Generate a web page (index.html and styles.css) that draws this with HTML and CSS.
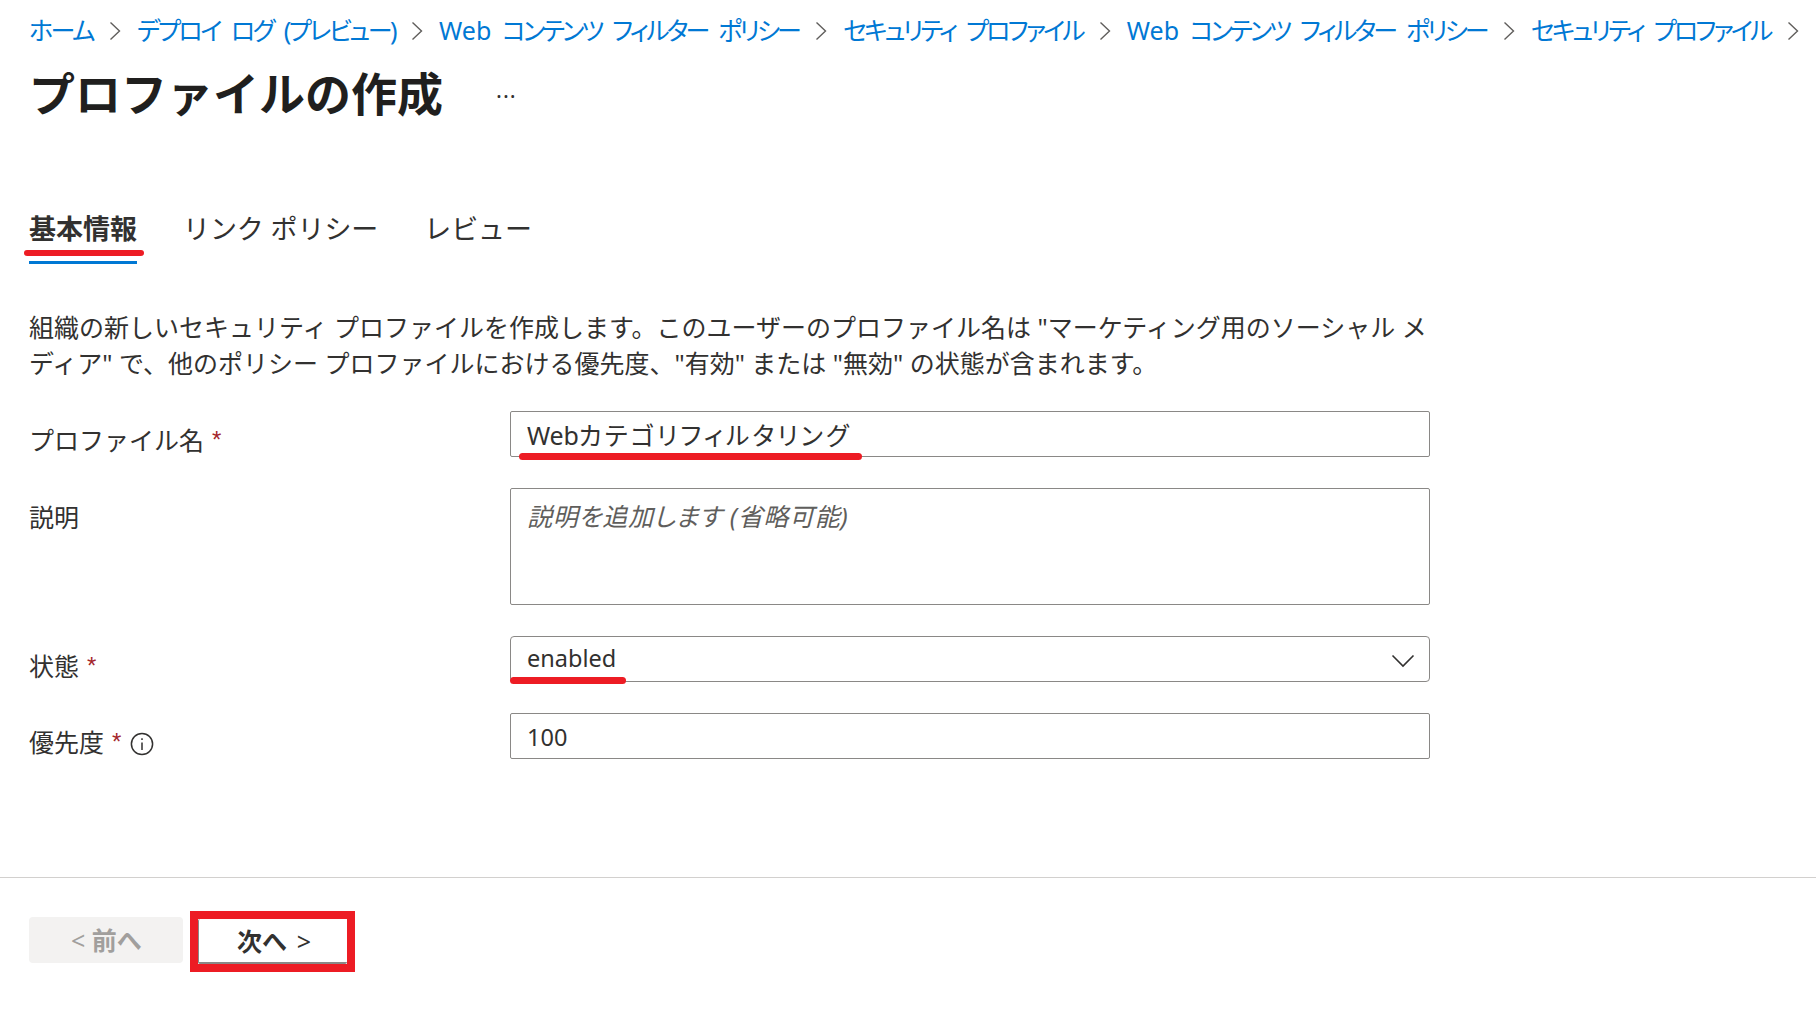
FILE: index.html
```html
<!DOCTYPE html>
<html lang="ja">
<head>
<meta charset="utf-8">
<title>プロファイルの作成</title>
<link rel="stylesheet" href="styles.css">
</head>
<body>
<div class="page">
  <nav class="crumbs">
    <a class="crumb crumb-loose">ホーム</a><svg class="chev" viewBox="0 0 12 20"><path d="M1.5 1.5 L10.5 10 L1.5 18.5"/></svg>
    <a class="crumb crumb-loose">デプロイ ログ (プレビュー)</a><svg class="chev" viewBox="0 0 12 20"><path d="M1.5 1.5 L10.5 10 L1.5 18.5"/></svg>
    <a class="crumb"><span class="latin">Web</span> コンテンツ フィルター ポリシー</a><svg class="chev" viewBox="0 0 12 20"><path d="M1.5 1.5 L10.5 10 L1.5 18.5"/></svg>
    <a class="crumb">セキュリティ プロファイル</a><svg class="chev" viewBox="0 0 12 20"><path d="M1.5 1.5 L10.5 10 L1.5 18.5"/></svg>
    <a class="crumb"><span class="latin">Web</span> コンテンツ フィルター ポリシー</a><svg class="chev" viewBox="0 0 12 20"><path d="M1.5 1.5 L10.5 10 L1.5 18.5"/></svg>
    <a class="crumb">セキュリティ プロファイル</a><svg class="chev" viewBox="0 0 12 20"><path d="M1.5 1.5 L10.5 10 L1.5 18.5"/></svg>
  </nav>
  <header class="title-row">
    <h1 class="title">プロファイルの作成</h1>
    <span class="more">...</span>
  </header>
  <div class="tabs">
    <div class="tab tab-active">基本情報<span class="mark mark-tab"></span></div>
    <div class="tab">リンク ポリシー</div>
    <div class="tab">レビュー</div>
  </div>
  <p class="intro">組織の新しいセキュリティ プロファイルを作成します。このユーザーのプロファイル名は "マーケティング用のソーシャル メディア" で、他のポリシー プロファイルにおける優先度、"有効" または "無効" の状態が含まれます。</p>
  <form class="form">
    <div class="field">
      <label class="label">プロファイル名 <span class="req">*</span></label>
      <div class="box box-name"><span class="latin">Web</span>カテゴリフィルタリング<span class="mark mark-name"></span></div>
    </div>
    <div class="field">
      <label class="label">説明</label>
      <div class="box box-area">説明を追加します (省略可能)</div>
    </div>
    <div class="field field-state">
      <label class="label label-state">状態 <span class="req">*</span></label>
      <div class="box box-select"><span class="select-value">enabled</span>
        <svg class="caret" viewBox="0 0 24 14"><path d="M1.5 1.5 L12 12 L22.5 1.5"/></svg>
        <span class="mark mark-state"></span>
      </div>
    </div>
    <div class="field field-num">
      <label class="label">優先度 <span class="req">*</span>
        <svg class="info" viewBox="0 0 24 24"><circle cx="12" cy="12" r="10.6"/><path d="M12 10.5 V18 M12 6.2 V8"/></svg>
      </label>
      <div class="box box-num">100</div>
    </div>
  </form>
  <footer class="footer">
    <button class="btn btn-off" type="button"><span class="btn-arrow">&lt;</span> 前へ</button>
    <div class="next-frame"><button class="btn btn-next" type="button">次へ <span class="btn-arrow">&gt;</span></button></div>
  </footer>
</div>
</body>
</html>
```
FILE: styles.css
```css
* { box-sizing: border-box; }
html, body { margin: 0; height: 100%; background: #fff; }
body {
  font-family: "Noto Sans", "Noto Sans CJK JP", sans-serif;
  color: #323130;
  overflow: hidden;
}
.page { height: 1011px; display: flex; flex-direction: column; }
.crumbs {
  display: flex; align-items: center; gap: 14px;
  height: 30px; margin-top: 15px; padding-left: 29px;
  white-space: nowrap;
}
.crumb { color: #0078d4; font-size: 25px; letter-spacing: -2.85px; line-height: 30px; font-feature-settings: "palt"; word-spacing: 7px; }
.crumb-loose { letter-spacing: -2.5px; }
.crumb .latin { letter-spacing: 0; }
.chev { width: 12px; height: 20px; margin: 2px 2px 0; flex: none; }
.chev path { fill: none; stroke: #605e5c; stroke-width: 1.4; }
.title-row {
  display: flex; align-items: center;
  height: 60px; margin-top: 18px; padding-left: 29px;
}
.title { margin: 0; font-size: 46px; font-weight: 700; color: #201f1e; line-height: 60px; }
.more { margin-left: 53px; margin-top: -8px; font-size: 22px; letter-spacing: 1px; color: #323130; line-height: 20px; }
.tabs {
  display: flex; gap: 46px;
  margin-top: 86px; padding-left: 29px;
}
.tab { position: relative; font-size: 27px; line-height: 40px; height: 53px; letter-spacing: -.1px; }
.tab-active { font-weight: 700; border-bottom: 3px solid #0078d4; height: 55px; color: #323130; font-feature-settings: "palt"; letter-spacing: 0; }
.mark { position: absolute; background: #ed1c24; border-radius: 4px; height: 6px; }
.mark-tab { left: -5px; right: -7px; bottom: 5px; }
.intro {
  margin: 45px 0 0 29px; width: 1401px;
  font-size: 25px; line-height: 36px; color: #323130;
}
.form { display: flex; flex-direction: column; gap: 30px; margin: 30px 0 0 29px; }
.field { display: grid; grid-template-columns: 481px 920px; align-items: start; }
.field-state { margin-top: 1px; }
.field-num { margin-top: -1px; }
.label { display: flex; align-items: center; gap: 8px; font-size: 25px; line-height: 36px; padding-top: 11px; white-space: nowrap; }
.label-state { padding-top: 12px; }
.req { color: #a4262c; font-family: "Liberation Sans", sans-serif; font-size: 24px; }
.info { width: 24px; height: 24px; margin: 4px 0 0 1px; }
.info circle, .info path { fill: none; stroke: #323130; stroke-width: 1.5; }
.box {
  position: relative; height: 46px;
  border: 1px solid #8a8886; border-radius: 2px;
  padding: 0 16px; font-size: 23.5px; line-height: 44px; color: #323130;
}
.box-name { font-feature-settings: "palt"; font-size: 25px; letter-spacing: 3px; line-height: 46px; }
.box-name .latin { letter-spacing: -.2px; }
.box-area { height: 117px; font-size: 25px; font-style: italic; color: #605e5c; line-height: 54px; font-feature-settings: "palt"; letter-spacing: .7px; }
.box-select { display: flex; justify-content: space-between; align-items: center; border-radius: 4px; }
.select-value { margin-top: -3px; }
.box-num { line-height: 46px; }
.caret { position: absolute; right: 14px; top: 17px; width: 24px; height: 14px; }
.caret path { fill: none; stroke: #323130; stroke-width: 1.6; }
.mark-name { left: 8px; width: 343px; top: 41px; height: 7px; }
.mark-state { left: -1px; width: 116px; top: 40px; height: 7px; }
.footer {
  margin-top: auto; height: 134px;
  border-top: 1px solid #d2d0ce;
  display: flex; align-items: flex-start; gap: 7px;
  padding: 33px 0 0 29px;
}
.btn {
  font: 700 25px "Noto Sans", "Noto Sans CJK JP", sans-serif;
  font-feature-settings: "palt";
  border-radius: 4px; height: 46px; width: 154px; padding: 0 0 2px;
}
.btn-arrow { font-weight: 400; }
.btn-off { background: #f3f2f1; color: #a19f9d; border: 0; margin-top: 6px; }
.next-frame { border: 8px solid #ed1c24; height: 61px; width: 165px; }
.btn-next { display: block; width: 100%; height: 100%; background: #fff; color: #323130; border: 0; border-bottom: 2px solid #8a8886; border-left: 1px solid #8a8886; border-radius: 2px; word-spacing: 4px; padding-left: 2px; }
```
